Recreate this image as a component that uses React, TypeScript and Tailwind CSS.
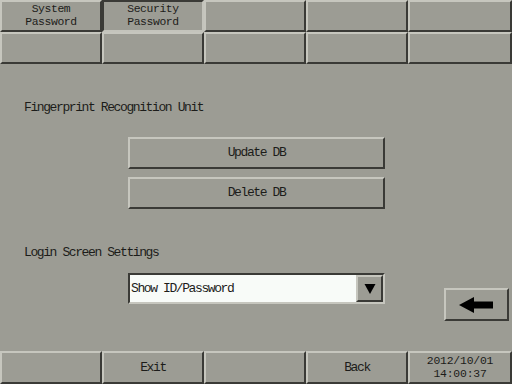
import React from "react";

const FONT = "font-['Liberation_Mono',monospace] text-[13px] tracking-[-1.4px] text-[#1c1c1a]";

// raised panel button look
function Bevel({ children, className = "", pressed = false }: { children?: React.ReactNode; className?: string; pressed?: boolean }) {
    return (
        <div
            className={
                "flex flex-col items-center justify-center bg-[#9c9c94] border-2 " +
                (pressed
                    ? "border-t-[#3a3a36] border-l-[#3a3a36] border-b-[#c4c4bc] border-r-[#c4c4bc] "
                    : "border-t-[#c6c6be] border-l-[#c6c6be] border-b-[#3a3a36] border-r-[#3a3a36] ") +
                className
            }
        >
            {children}
        </div>
    );
}

const TWO = "text-[11.4px] leading-[13px] tracking-[-0.4px]";

export default function App() {
    return (
        <div className={"w-[512px] h-[384px] bg-[#9c9c94] flex flex-col overflow-hidden " + FONT}>
            {/* Top tabs */}
            <div className="grid grid-cols-[102px_102px_102px_102px_104px] grid-rows-[32px_32px]">
                <Bevel className={TWO}>
                    <span>System</span>
                    <span>Password</span>
                </Bevel>
                <Bevel pressed className={TWO}>
                    <span>Security</span>
                    <span>Password</span>
                </Bevel>
                <Bevel />
                <Bevel />
                <Bevel />
                <Bevel />
                <Bevel />
                <Bevel />
                <Bevel />
                <Bevel />
            </div>

            {/* Main */}
            <div className="flex-1 relative flex flex-col pt-[37px]">
                <p className="pl-[24px] leading-[13px]">Fingerprint Recognition Unit</p>
                <div className="pl-[128px] pt-[23px] flex flex-col gap-[8px]">
                    <Bevel className="w-[257px] h-[32px]">Update DB</Bevel>
                    <Bevel className="w-[257px] h-[32px]">Delete DB</Bevel>
                </div>
                <p className="pl-[24px] pt-[37px] leading-[13px]">Login Screen Settings</p>
                <div className="pl-[128px] pt-[14px] flex">
                    <div className="w-[257px] h-[31px] flex border-2 border-t-[#3a3a36] border-l-[#3a3a36] border-b-[#c6c6be] border-r-[#c6c6be] bg-[#f8fbf8]">
                        <div className="flex-1 flex items-center pl-[1px]">Show ID/Password</div>
                        <Bevel className="w-[27px] h-full">
                            <svg width="12" height="12" viewBox="0 0 12 12">
                                <polygon points="0.5,1 11.5,1 6,11" fill="#000" />
                            </svg>
                        </Bevel>
                    </div>
                </div>
                <Bevel className="absolute left-[444px] top-[224px] w-[65px] h-[33px]">
                    <svg width="36" height="16" viewBox="0 0 36 16">
                        <polygon points="0,8 15,0 15,4.5 34,4.5 34,11.5 15,11.5 15,16" fill="#000" />
                    </svg>
                </Bevel>
            </div>

            {/* Bottom bar */}
            <div className="grid grid-cols-[102px_102px_102px_102px_104px] h-[33px]">
                <Bevel />
                <Bevel>Exit</Bevel>
                <Bevel />
                <Bevel>Back</Bevel>
                <Bevel className="text-[11.4px] leading-[13px] tracking-[-0.2px]">
                    <span>2012/10/01</span>
                    <span>14:00:37</span>
                </Bevel>
            </div>
        </div>
    );
}
